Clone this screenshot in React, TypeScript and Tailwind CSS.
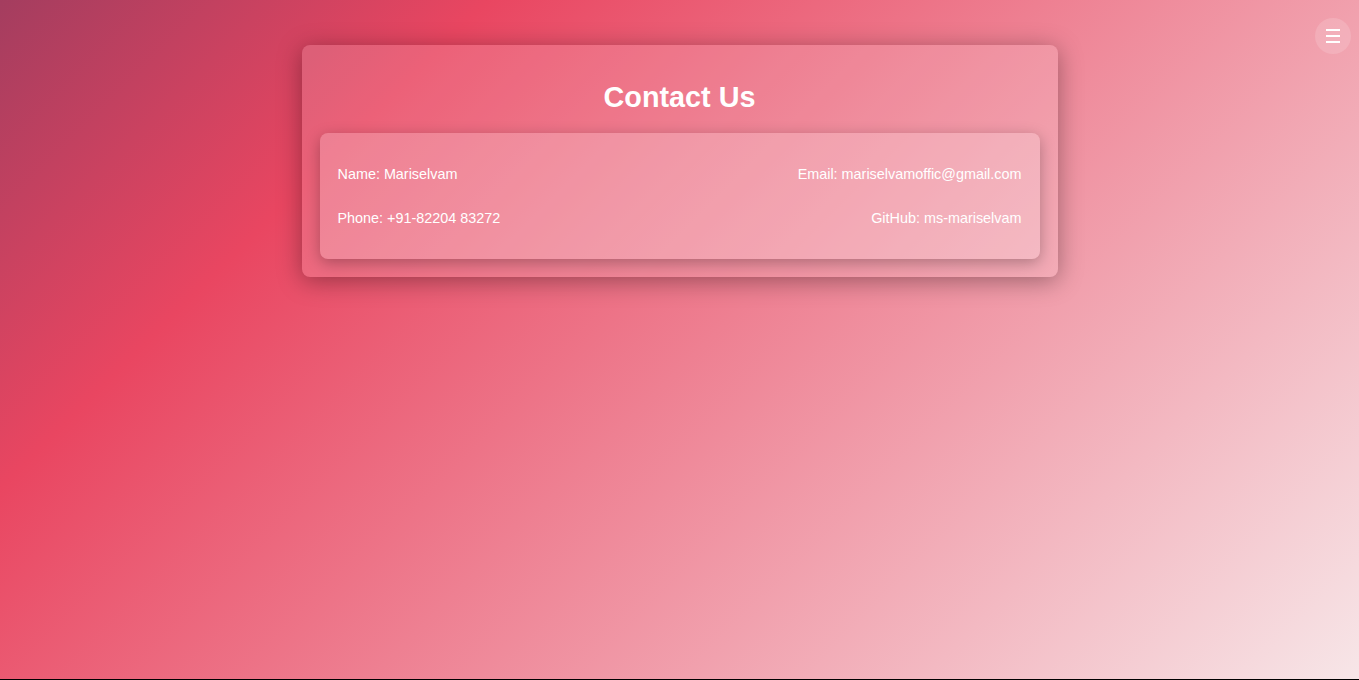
const rows = [
  ['Name: Mariselvam', 'Email: mariselvamoffic@gmail.com'],
  ['Phone: +91-82204 83272', 'GitHub: ms-mariselvam'],
];

export default function App() {
  return (
    <div
      className="relative h-[680px] w-full overflow-hidden border-b border-black bg-[linear-gradient(135deg,#a43d5f_0%,#e94661_24%,#f7e6e8_100%)] font-['Liberation_Sans',Arial,sans-serif] text-white"
    >
      <button
        type="button"
        aria-label="Menu"
        className="absolute right-[8px] top-[18px] flex h-[36px] w-[36px] flex-col items-center justify-center gap-[4px] rounded-full bg-white/15"
      >
        <span className="h-[2px] w-[14px] bg-white" />
        <span className="h-[2px] w-[14px] bg-white" />
        <span className="h-[2px] w-[14px] bg-white" />
      </button>

      <div className="flex justify-center pt-[45px]">
        <section className="w-[756px] rounded-[8px] bg-white/15 px-[18px] pb-[18px] pt-[18px] shadow-[0_4px_24px_rgba(0,0,0,0.35)]">
          <h2 className="mb-[19px] mt-[18px] text-center text-[28.8px] font-bold leading-[33px]">Contact Us</h2>

          <div className="rounded-[8px] bg-white/20 px-[18px] pb-[18px] pt-[20px] shadow-[0_4px_15px_rgba(0,0,0,0.28)]">
            {rows.map(([left, right]) => (
              <div key={left} className="flex h-[44px] items-center justify-between text-[14.4px]">
                <span>{left}</span>
                <span>{right}</span>
              </div>
            ))}
          </div>
        </section>
      </div>
    </div>
  );
}
